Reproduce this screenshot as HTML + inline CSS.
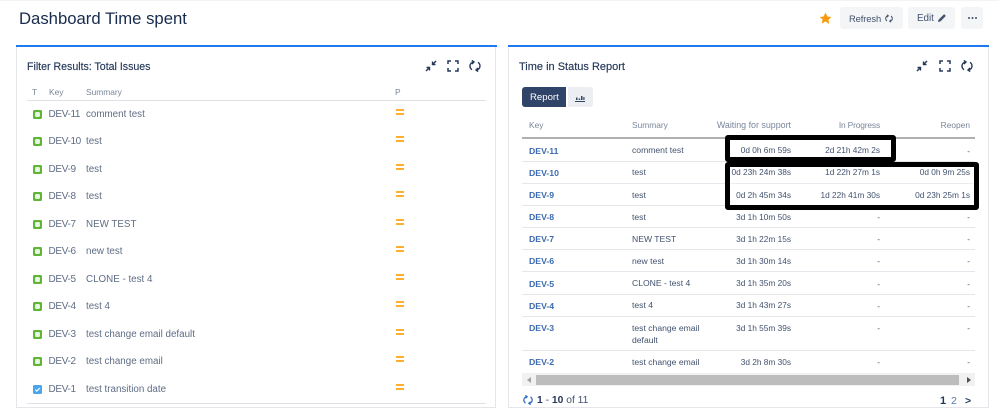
<!DOCTYPE html>
<html><head><meta charset="utf-8"><style>
html,body{margin:0;padding:0;background:#fff}
body{position:relative;width:999px;height:408px;overflow:hidden;font-family:"Liberation Sans",sans-serif;color:#505f79}
.a,.t,.l,.s,.r,.k,.lk{position:absolute}
.t,.l,.s,.r,.k,.lk{white-space:nowrap;line-height:14px}
.l{font-size:9.8px;color:#5e6c84;left:86px}
.lk{font-size:10px;letter-spacing:-.35px;color:#5e6c84;left:48.500px}
.s{font-size:8.6px;color:#42526e}
.r{font-size:8.300px;color:#42526e;text-align:right}
.k{font-size:8.700px;font-weight:bold;color:#3d6ab0;left:529px}
.h{font-size:8.4px;color:#7a869a}
.ln{position:absolute;left:522px;width:453px;height:1px;background:#e4e6eb}
.g{position:absolute;left:33px;width:9px;height:9px;background:#5fb636;border-radius:1.500px}
.g:after{content:"";position:absolute;left:2px;top:2px;width:5px;height:5px;background:#e8f5e0;border-radius:1.500px}
.p{position:absolute;left:396px;width:8px;box-sizing:border-box;height:6px;border-top:2px solid #ffb02e;border-bottom:2px solid #ffb02e}
svg{position:absolute;overflow:visible}
</style></head><body>
<div class="a" style="left:0;top:0;width:999px;height:1px;background:#f2f3f5"></div>
<div class="t" style="left:19px;top:9px;font-size:16.7px;line-height:20px;color:#172b4d">Dashboard Time spent</div>

<svg style="left:819px;top:12px" width="13" height="13" viewBox="0 0 12 12"><path d="M6 .5l1.700 3.600 3.800.5-2.800 2.600.7 3.900L6 8.700l-3.400 1.900.7-3.900L.5 4.600l3.800-.5z" fill="#f79a0e"/></svg>
<div class="a" style="left:840px;top:7px;width:63px;height:22px;background:#f4f5f7;border-radius:3px"></div>
<div class="t" style="left:849px;top:12px;font-size:9.400px;letter-spacing:-.1px;color:#42526e">Refresh</div>
<svg style="left:885px;top:14px" width="8" height="9" viewBox="0 0 12 12" fill="none" stroke="#42526e" stroke-width="1.500"><path d="M4.500 2C2.300 2.600 1 4.200 1 6c0 1.600.8 2.900 2 3.700M2.800.4L5 2 3 4M7.500 10C9.700 9.400 11 7.800 11 6c0-1.600-.8-2.900-2-3.700M9.200 11.600L7 10l2-2"/></svg>
<div class="a" style="left:908px;top:7px;width:47px;height:22px;background:#f4f5f7;border-radius:3px"></div>
<div class="t" style="left:917px;top:12px;font-size:9.800px;color:#42526e">Edit</div>
<svg style="left:938px;top:14px" width="8" height="8" viewBox="0 0 8 8"><path d="M0 8l.5-2.300L5.500.7a1 1 0 0 1 1.300 0l.5.5a1 1 0 0 1 0 1.300l-5 5z" fill="#42526e"/></svg>
<div class="a" style="left:961px;top:7px;width:22px;height:22px;background:#f4f5f7;border-radius:3px"></div>
<svg style="left:968px;top:17px" width="9" height="2" viewBox="0 0 9 2" fill="#42526e"><circle cx="1" cy="1" r="1"/><circle cx="4.500" cy="1" r="1"/><circle cx="8" cy="1" r="1"/></svg>

<!-- left panel -->
<div class="a" style="left:16px;top:45px;width:480px;height:363px;border:1px solid #e4e6ea;border-top:0;box-sizing:border-box;"></div>
<div class="a" style="left:16px;top:45px;width:481px;height:2px;background:#1f7af0"></div>
<div class="t" style="left:27px;top:60px;font-size:10.600px;color:#253858;-webkit-text-stroke:.15px #253858">Filter Results: Total Issues</div>
<svg style="left:425px;top:60px" width="12" height="12" viewBox="0 0 12 12" fill="none" stroke="#253858" stroke-width="1.400"><path d="M11 1L7.500 4.500M7.500 1.500v3h3M1 11l3.500-3.500M1.500 7.500h3v3"/></svg>
<svg style="left:447px;top:60px" width="12" height="12" viewBox="0 0 12 12" fill="none" stroke="#253858" stroke-width="1.500"><path d="M1 4V1h3M8 1h3v3M11 8v3H8M4 11H1V8"/></svg>
<svg style="left:469px;top:60px" width="12" height="12" viewBox="0 0 12 12" fill="none" stroke="#253858" stroke-width="1.400"><path d="M4.500 2C2.300 2.600 1 4.200 1 6c0 1.600.8 2.900 2 3.700M2.800.4L5 2 3 4M7.500 10C9.700 9.400 11 7.800 11 6c0-1.600-.8-2.900-2-3.700M9.200 11.600L7 10l2-2"/></svg>
<div class="t h" style="left:32px;top:85px">T</div>
<div class="t h" style="left:49px;top:85px">Key</div>
<div class="t h" style="left:86px;top:85px">Summary</div>
<div class="t h" style="left:395px;top:85px">P</div>
<div class="a" style="left:27px;top:100px;width:459px;height:1px;background:#dfe1e6"></div>
<div class="a" style="left:27px;top:403px;width:459px;height:1px;background:#dfe1e6"></div>

<div class="g" style="top:110px"></div><div class="lk" style="top:108px">DEV-11</div><div class="l" style="top:108px">comment test</div><div class="p" style="top:109px"></div>
<div class="g" style="top:137px"></div><div class="lk" style="top:135px">DEV-10</div><div class="l" style="top:135px">test</div><div class="p" style="top:136px"></div>
<div class="g" style="top:165px"></div><div class="lk" style="top:163px">DEV-9</div><div class="l" style="top:163px">test</div><div class="p" style="top:164px"></div>
<div class="g" style="top:192px"></div><div class="lk" style="top:190px">DEV-8</div><div class="l" style="top:190px">test</div><div class="p" style="top:191px"></div>
<div class="g" style="top:220px"></div><div class="lk" style="top:218px">DEV-7</div><div class="l" style="top:218px">NEW TEST</div><div class="p" style="top:219px"></div>
<div class="g" style="top:247px"></div><div class="lk" style="top:245px">DEV-6</div><div class="l" style="top:245px">new test</div><div class="p" style="top:246px"></div>
<div class="g" style="top:275px"></div><div class="lk" style="top:273px">DEV-5</div><div class="l" style="top:273px">CLONE - test 4</div><div class="p" style="top:274px"></div>
<div class="g" style="top:302px"></div><div class="lk" style="top:300px">DEV-4</div><div class="l" style="top:300px">test 4</div><div class="p" style="top:301px"></div>
<div class="g" style="top:330px"></div><div class="lk" style="top:328px">DEV-3</div><div class="l" style="top:328px">test change email default</div><div class="p" style="top:329px"></div>
<div class="g" style="top:357px"></div><div class="lk" style="top:355px">DEV-2</div><div class="l" style="top:355px">test change email</div><div class="p" style="top:356px"></div>
<div class="a" style="left:33px;top:385px;width:9px;height:9px;background:#4aa5ec;border-radius:1.500px"></div>
<svg style="left:33px;top:385px" width="9" height="9" viewBox="0 0 9 9" fill="none" stroke="#fff" stroke-width="1.200"><path d="M2.300 4.700l1.500 1.500 3-3.200"/></svg>
<div class="lk" style="top:383px">DEV-1</div><div class="l" style="top:383px">test transition date</div><div class="p" style="top:384px"></div>

<!-- right panel -->
<div class="a" style="left:508px;top:45px;width:481px;height:363px;border:1px solid #e4e6ea;border-top:0;box-sizing:border-box"></div>
<div class="a" style="left:508px;top:45px;width:481px;height:2px;background:#1f7af0"></div>
<div class="t" style="left:519px;top:60px;font-size:11px;color:#253858;-webkit-text-stroke:.15px #253858">Time in Status Report</div>
<svg style="left:916px;top:60px" width="12" height="12" viewBox="0 0 12 12" fill="none" stroke="#253858" stroke-width="1.400"><path d="M11 1L7.500 4.500M7.500 1.500v3h3M1 11l3.500-3.500M1.500 7.500h3v3"/></svg>
<svg style="left:939px;top:60px" width="12" height="12" viewBox="0 0 12 12" fill="none" stroke="#253858" stroke-width="1.500"><path d="M1 4V1h3M8 1h3v3M11 8v3H8M4 11H1V8"/></svg>
<svg style="left:961px;top:60px" width="12" height="12" viewBox="0 0 12 12" fill="none" stroke="#253858" stroke-width="1.400"><path d="M4.500 2C2.300 2.600 1 4.200 1 6c0 1.600.8 2.900 2 3.700M2.800.4L5 2 3 4M7.500 10C9.700 9.400 11 7.800 11 6c0-1.600-.8-2.900-2-3.700M9.200 11.600L7 10l2-2"/></svg>
<div class="a" style="left:522px;top:87px;width:44px;height:20px;background:#2f4468;border-radius:3px 0 0 3px"></div>
<div class="t" style="left:530px;top:91px;font-size:9.600px;color:#fff">Report</div>
<div class="a" style="left:568px;top:87px;width:25px;height:20px;background:#eceef2;border-radius:0 3px 3px 0"></div>
<svg style="left:575px;top:94px" width="10" height="8" viewBox="0 0 10 8" fill="#2f4468"><path d="M0 7h10v1H0zM1 3.500h1.500V6H1zM3.700 4.500h1.500V6H3.700zM6 2h1.500v4H6zM8.300 3h1.200v3H8.300z"/></svg>
<div class="t h" style="left:529px;top:118px">Key</div>
<div class="t h" style="left:632px;top:118px">Summary</div>
<div class="t h" style="right:208px;top:118px;font-size:8.900px">Waiting for support</div>
<div class="t h" style="right:119px;top:118px;letter-spacing:-.15px">In Progress</div>
<div class="t h" style="right:29px;top:118px">Reopen</div>
<div class="a" style="left:522px;top:137px;width:453px;height:2px;background:#b0b0b0"></div>

<div class="ln" style="top:161px"></div><div class="ln" style="top:183px"></div><div class="ln" style="top:205px"></div><div class="ln" style="top:227px"></div><div class="ln" style="top:249px"></div><div class="ln" style="top:271px"></div><div class="ln" style="top:294px"></div><div class="ln" style="top:316px"></div><div class="ln" style="top:350px"></div>

<!-- black highlight boxes -->
<div class="a" style="left:725px;top:135px;width:171px;height:27px;box-sizing:border-box;border:5px solid #000;border-radius:3px;background:#fff"></div>
<div class="a" style="left:725px;top:162px;width:254px;height:48px;box-sizing:border-box;border:5px solid #000;border-radius:3px;background:#fff"></div>
<div class="a" style="left:731px;top:183px;width:242px;height:1px;background:#e9ebf0"></div>

<div class="k" style="top:144px">DEV-11</div><div class="s" style="left:632px;top:143px">comment test</div><div class="r" style="right:208px;top:143px">0d 0h 6m 59s</div><div class="r" style="right:119px;top:143px">2d 21h 42m 2s</div><div class="r" style="right:29px;top:144px">-</div>
<div class="k" style="top:166px">DEV-10</div><div class="s" style="left:632px;top:165px">test</div><div class="r" style="right:208px;top:165px">0d 23h 24m 38s</div><div class="r" style="right:119px;top:165px">1d 22h 27m 1s</div><div class="r" style="right:29px;top:165px">0d 0h 9m 25s</div>
<div class="k" style="top:188px">DEV-9</div><div class="s" style="left:632px;top:188px">test</div><div class="r" style="right:208px;top:188px">0d 2h 45m 34s</div><div class="r" style="right:119px;top:188px">1d 22h 41m 30s</div><div class="r" style="right:29px;top:188px">0d 23h 25m 1s</div>
<div class="k" style="top:210px">DEV-8</div><div class="s" style="left:632px;top:210px">test</div><div class="r" style="right:208px;top:210px">3d 1h 10m 50s</div><div class="r" style="right:119px;top:210px">-</div><div class="r" style="right:29px;top:210px">-</div>
<div class="k" style="top:232px">DEV-7</div><div class="s" style="left:632px;top:232px">NEW TEST</div><div class="r" style="right:208px;top:232px">3d 1h 22m 15s</div><div class="r" style="right:119px;top:232px">-</div><div class="r" style="right:29px;top:232px">-</div>
<div class="k" style="top:254px">DEV-6</div><div class="s" style="left:632px;top:254px">new test</div><div class="r" style="right:208px;top:254px">3d 1h 30m 14s</div><div class="r" style="right:119px;top:254px">-</div><div class="r" style="right:29px;top:254px">-</div>
<div class="k" style="top:277px">DEV-5</div><div class="s" style="left:632px;top:276px">CLONE - test 4</div><div class="r" style="right:208px;top:276px">3d 1h 35m 20s</div><div class="r" style="right:119px;top:277px">-</div><div class="r" style="right:29px;top:277px">-</div>
<div class="k" style="top:299px">DEV-4</div><div class="s" style="left:632px;top:298px">test 4</div><div class="r" style="right:208px;top:298px">3d 1h 43m 27s</div><div class="r" style="right:119px;top:299px">-</div><div class="r" style="right:29px;top:299px">-</div>
<div class="k" style="top:321px">DEV-3</div><div class="s" style="left:632px;top:321px">test change email</div><div class="s" style="left:632px;top:333px">default</div><div class="r" style="right:208px;top:321px">3d 1h 55m 39s</div><div class="r" style="right:119px;top:321px">-</div><div class="r" style="right:29px;top:321px">-</div>
<div class="k" style="top:355px">DEV-2</div><div class="s" style="left:632px;top:355px">test change email</div><div class="r" style="right:208px;top:355px">3d 2h 8m 30s</div><div class="r" style="right:119px;top:355px">-</div><div class="r" style="right:29px;top:355px">-</div>

<!-- scrollbar -->
<div class="a" style="left:522px;top:373px;width:453px;height:13px;background:#f1f1f1"></div>
<div class="a" style="left:536px;top:375px;width:423px;height:10px;background:#bdbdbd"></div>
<svg style="left:527px;top:377px" width="4" height="6"><path d="M4 0v6L0 3z" fill="#a3a3a3"/></svg>
<svg style="left:967px;top:377px" width="4" height="6"><path d="M0 0v6l4-3z" fill="#505050"/></svg>
<!-- pagination -->
<svg style="left:523px;top:395px" width="10" height="10" viewBox="0 0 12 12" fill="none" stroke="#2f6bc4" stroke-width="1.500"><path d="M4.500 2C2.300 2.600 1 4.200 1 6c0 1.600.8 2.900 2 3.700M2.800.4L5 2 3 4M7.500 10C9.700 9.400 11 7.800 11 6c0-1.600-.8-2.900-2-3.700M9.200 11.600L7 10l2-2"/></svg>
<div class="t" style="left:537px;top:394px;font-size:10.300px;color:#42526e"><b style="color:#253858">1</b> - <b style="color:#253858">10</b> of 11</div>
<div class="t" style="left:940px;top:394px;font-size:11px;font-weight:bold;color:#253858">1</div>
<div class="t" style="left:951px;top:394px;font-size:10.500px;color:#5a7bb0">2</div>
<div class="t" style="left:965px;top:394px;font-size:10.500px;font-weight:bold;color:#253858">&gt;</div>
</body></html>
